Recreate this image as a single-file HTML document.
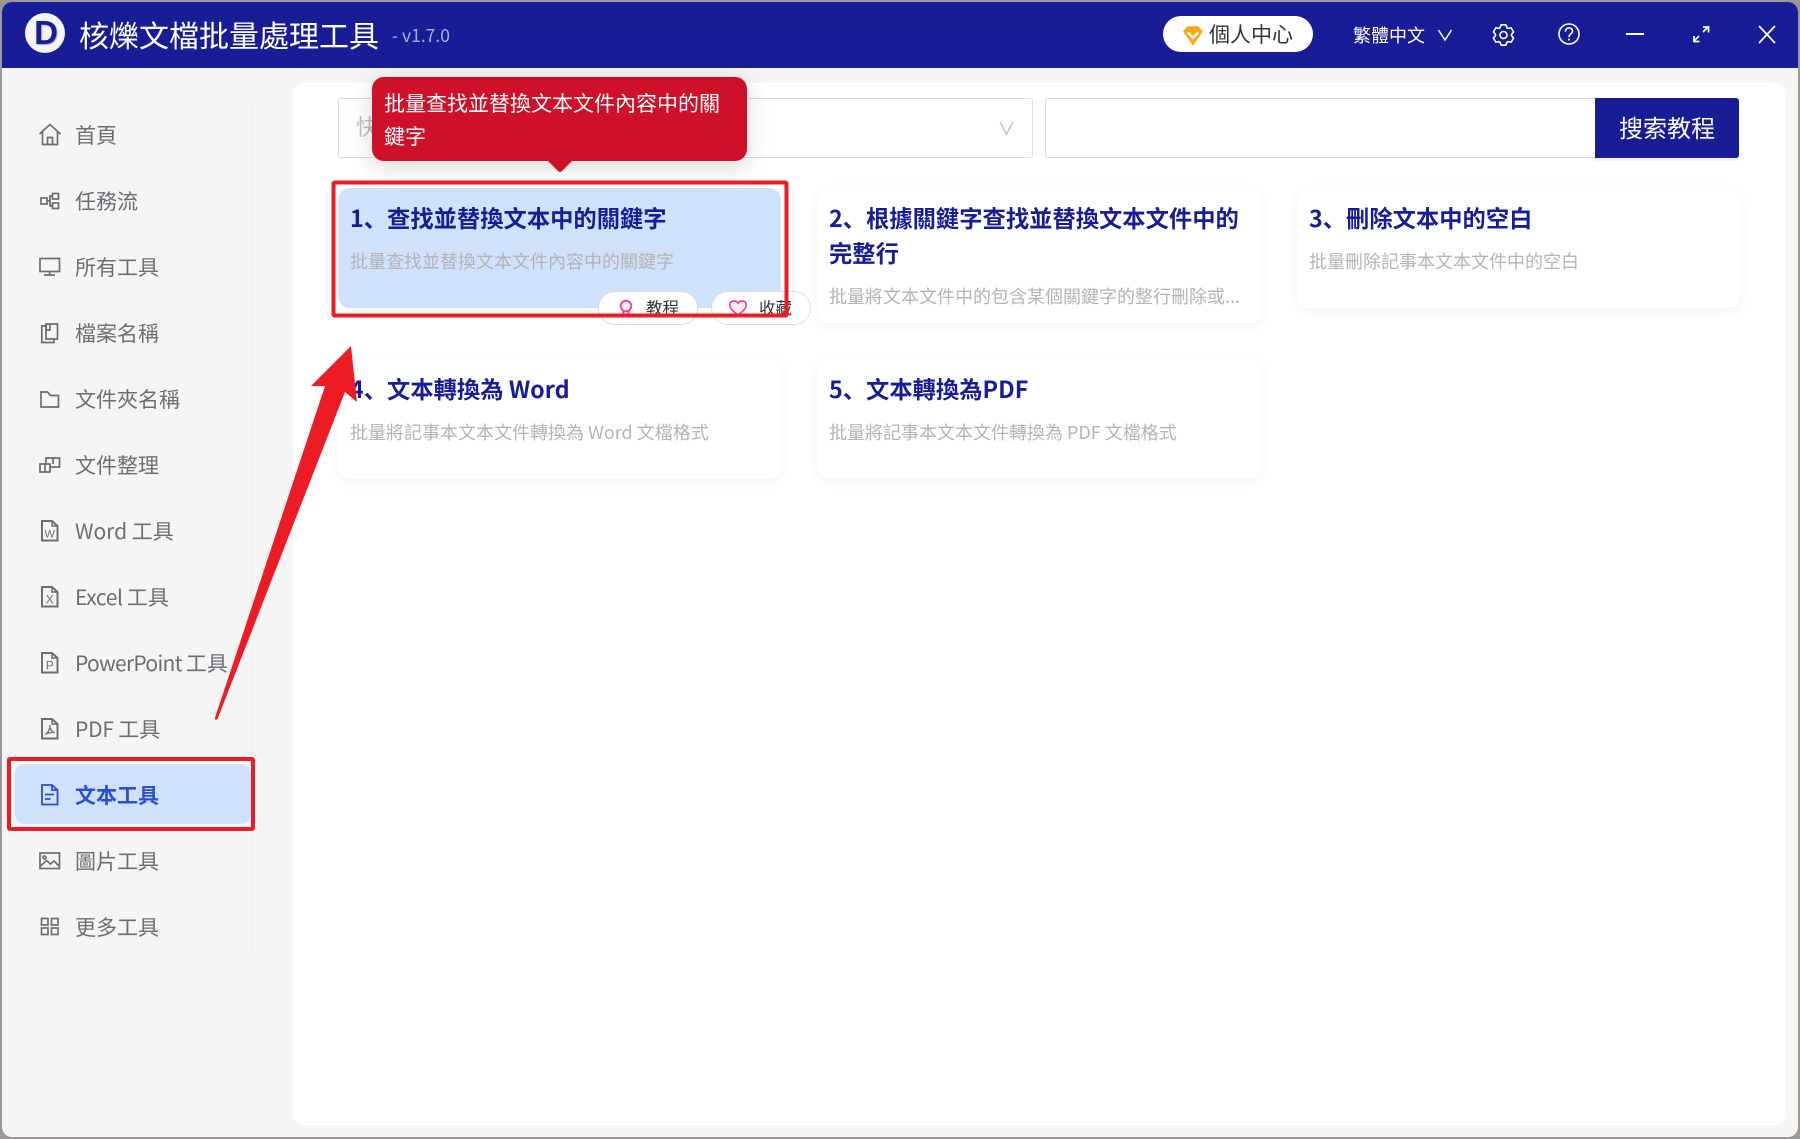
<!DOCTYPE html>
<html lang="zh-Hans">
<head>
<meta charset="utf-8">
<title>核爍文檔批量處理工具</title>
<style>
*{box-sizing:border-box;margin:0;padding:0}
html,body{width:1800px;height:1139px;overflow:hidden;background:#9d9896}
body{position:relative;font-family:"Noto Sans CJK SC","Liberation Sans",sans-serif}
#win{position:absolute;left:2px;top:2px;width:1796px;height:1135px;background:#f5f5f5;border-radius:10px;overflow:hidden}
.a{position:absolute;white-space:nowrap}
#hd{left:2px;top:2px;width:1796px;height:66px;background:#181d97;border-radius:10px 10px 0 0;position:absolute}
.mi{position:absolute;left:75px;height:30px;line-height:30px;font-size:21px;color:#6b6e73;white-space:nowrap}
.card{position:absolute;background:#fff;border-radius:12px;box-shadow:0 3px 12px rgba(0,0,0,.05);width:443px;height:120px}
.t{position:absolute;left:12px;font-size:23.3px;line-height:35px;font-weight:700;color:#181d97;white-space:nowrap}
.d{position:absolute;left:12px;font-size:18px;line-height:26px;color:#b4b4b4;white-space:nowrap}
.pill{position:absolute;top:291px;height:34px;background:#fff;border:1px solid #dcdcdc;border-radius:17px}
.pt{position:absolute;top:292.500px;line-height:28px;font-size:16.500px;color:#333;white-space:nowrap}
</style>
</head>
<body>
<div id="win"></div>
<div id="hd"></div>

<!-- header left -->
<div class="a" style="left:25px;top:13px;width:40px;height:40px;border-radius:50%;background:#f4f4f6"></div>
<div class="a" style="left:33px;top:15px;width:26px;height:36px;line-height:36px;text-align:center;font-family:'Liberation Sans',sans-serif;font-size:33px;font-weight:700;color:#181d97;text-shadow:1px 1px 1px rgba(0,0,0,.3)">D</div>
<div class="a" style="left:79px;top:14px;line-height:40px;font-size:30px;color:#fff">核爍文檔批量處理工具</div>
<div class="a" style="left:392px;top:22.500px;line-height:26px;font-size:17.500px;color:#aeb0d8">- v1.7.0</div>

<!-- header right -->
<div class="a" style="left:1163px;top:16px;width:150px;height:36px;border-radius:18px;background:#fff"></div>
<div class="a" style="left:1209px;top:19px;line-height:30px;font-size:21px;color:#333">個人中心</div>
<div class="a" style="left:1353px;top:20.500px;line-height:28px;font-size:18px;color:#fff">繁體中文</div>

<!-- panel -->
<div class="a" style="left:293px;top:83px;width:1492px;height:1042px;background:#fff;border-radius:10px"></div>
<div class="a" style="left:251px;top:98px;width:1px;height:858px;background:#f0f0f0"></div>

<!-- search row -->
<div class="a" style="left:338px;top:98px;width:695px;height:60px;border:1px solid #dcdcdc;border-radius:3px;background:#fff"></div>
<div class="a" style="left:356px;top:110px;line-height:32px;font-size:22px;color:#c0c0c0">快速搜索</div>
<div class="a" style="left:1045px;top:98px;width:555px;height:60px;border:1px solid #dcdcdc;border-radius:3px 0 0 3px;background:#fff"></div>
<div class="a" style="left:1595px;top:98px;width:144px;height:60px;background:#181d97;border-radius:0 3px 3px 0;box-shadow:0 3px 0 #f2f2f2;color:#fff;font-size:24px;line-height:58px;text-align:center">搜索教程</div>

<!-- sidebar -->
<div class="a" style="left:15px;top:764px;width:236px;height:60px;border-radius:10px;background:#d0e1fb"></div>
<div class="mi" style="top:120px">首頁</div>
<div class="mi" style="top:186px">任務流</div>
<div class="mi" style="top:252px">所有工具</div>
<div class="mi" style="top:318px">檔案名稱</div>
<div class="mi" style="top:384px">文件夾名稱</div>
<div class="mi" style="top:450px">文件整理</div>
<div class="mi" style="top:516px">Word 工具</div>
<div class="mi" style="top:582px"><span style="letter-spacing:-.4px">Excel </span>工具</div>
<div class="mi" style="top:648px"><span style="letter-spacing:-.7px">PowerPoint </span>工具</div>
<div class="mi" style="top:714px"><span style="letter-spacing:-.2px">PDF </span>工具</div>
<div class="mi" style="top:780px;color:#2f4fd2;font-weight:700">文本工具</div>
<div class="mi" style="top:846px">圖片工具</div>
<div class="mi" style="top:912px">更多工具</div>

<!-- cards -->
<div class="card" style="left:338px;top:188px;background:#d0e1fb;box-shadow:none">
  <div class="t" style="top:12px">1、查找並替換文本中的關鍵字</div>
  <div class="d" style="top:59.500px">批量查找並替換文本文件內容中的關鍵字</div>
</div>
<div class="card" style="left:817px;top:188px;height:135px;width:444px">
  <div class="t" style="top:12px">2、根據關鍵字查找並替換文本文件中的</div>
  <div class="t" style="top:47px">完整行</div>
  <div class="d" style="top:94.500px">批量將文本文件中的包含某個關鍵字的整行刪除或...</div>
</div>
<div class="card" style="left:1297px;top:188px">
  <div class="t" style="top:12px">3、刪除文本中的空白</div>
  <div class="d" style="top:59.500px">批量刪除記事本文本文件中的空白</div>
</div>
<div class="card" style="left:338px;top:359px">
  <div class="t" style="top:12px">4、文本轉換為 Word</div>
  <div class="d" style="top:59.500px">批量將記事本文本文件轉換為 Word 文檔格式</div>
</div>
<div class="card" style="left:817px;top:359px;height:119px;width:444px">
  <div class="t" style="top:12px">5、文本轉換為PDF</div>
  <div class="d" style="top:59.500px">批量將記事本文本文件轉換為 PDF 文檔格式</div>
</div>

<!-- card pills -->
<div class="pill" style="left:598px;width:100px"></div>
<div class="pill" style="left:711px;width:100px"></div>
<div class="pt" style="left:646px">教程</div>
<div class="pt" style="left:759px">收藏</div>

<!-- tooltip -->
<div class="a" style="left:372px;top:77px;width:375px;height:84px;background:#cf1029;border-radius:12px;box-shadow:0 6px 24px rgba(0,0,0,.16)"></div>
<div class="a" style="left:384px;top:87px;line-height:33px;font-size:21px;color:#fff">批量查找並替換文本文件內容中的關<br>鍵字</div>

<!-- all vector graphics -->
<svg class="a" style="left:0;top:0" width="1800" height="1139" viewBox="0 0 1800 1139" fill="none">
  <!-- tooltip tail -->
  <path d="M548 161H572L562 171Q560 173 558 171Z" fill="#cf1029"/>

  <!-- header icons -->
  <path d="M1184 31.500L1188 27H1198L1202 31.500L1193 44.500Z" fill="#f9a915" stroke="#f9a915" stroke-width="1.500" stroke-linejoin="round"/>
  <path d="M1188 32.500L1193 38L1198 32.500" stroke="#fff" stroke-width="2.400"/>
  <path d="M1438.500 30L1445 40L1451.500 30" stroke="#fff" stroke-width="1.500"/>
  <g stroke="#fff" stroke-width="1.600">
    <g transform="translate(1503.500 35)" stroke-linejoin="round">
      <path d="M-3.500 -7.190L-2.360 -10.230L2.360 -10.230L3.500 -7.190L4.470 -6.630L7.680 -7.160L10.040 -3.070L7.980 -.560L7.980 .560L10.040 3.070L7.680 7.160L4.470 6.630L3.500 7.190L2.360 10.230L-2.360 10.230L-3.500 7.190L-4.470 6.630L-7.680 7.160L-10.040 3.070L-7.980 .560L-7.980 -.560L-10.040 -3.070L-7.680 -7.160L-4.470 -6.630Z"/>
      <circle cx="0" cy="0" r="3.500"/>
    </g>
    <circle cx="1569" cy="34" r="10"/>
    <path d="M1565.500 31.500C1565.500 26.500 1573 27 1572.500 31.500C1572.300 33.800 1569 34 1569 37"/>
    <path d="M1569 38.500V40.500"/>
    <path d="M1626 34H1644" stroke-width="2"/>
    <path d="M1694 41L1699 36M1703 32L1708 27"/>
    <path d="M1694 36V41.500H1699.500M1703 27H1708.500V32.500" stroke-width="1.800"/>
    <path d="M1759 26L1775 43M1775 26L1759 43" stroke-width="1.700"/>
  </g>

  <!-- search chevron -->
  <path d="M1000 122L1006.500 134L1013 122" stroke="#c4c4c4" stroke-width="1.500"/>

  <!-- sidebar icons -->
  <g stroke="#6b6e73" stroke-width="1.700" stroke-linejoin="miter">
    <!-- home -->
    <path d="M39.500 134L50 124.500L60.500 134"/>
    <path d="M42.500 132V144.500H57.500V132"/>
    <path d="M47.500 144.500V137.500H52.500V144.500"/>
    <!-- flow -->
    <rect x="41" y="198" width="6" height="6"/>
    <rect x="52.500" y="193.500" width="6" height="5.500"/>
    <rect x="52.500" y="203" width="6" height="5.500"/>
    <path d="M47 201H50V196H52.500M50 201V206H52.500"/>
    <!-- monitor -->
    <rect x="40" y="258.500" width="19.500" height="13"/>
    <path d="M49.700 271.500V275M44 275H55"/>
    <!-- docs -->
    <path d="M46 326H41.800V342.500H54V339"/>
    <path d="M46 324H57.500V339H46Z"/>
    <path d="M46 324V330H50V324"/>
    <!-- folder -->
    <path d="M41 392H47.500L50.500 395.500H58.500V407H41Z"/>
    <!-- blocks -->
    <path d="M40 464H50V472H40ZM45 464V472"/>
    <path d="M46 464V458H59.500V467H50M53 458V464"/>
  </g>
  <g stroke="#6b6e73" stroke-width="2">
    <!-- w/x/p/pdf doc outlines -->
    <path d="M42 521H52L57.500 526V540.500H42Z"/><path d="M52 521V526H57.500" stroke-width="1.500"/>
    <path d="M42 587H52L57.500 592V606.500H42Z"/><path d="M52 587V592H57.500" stroke-width="1.500"/>
    <path d="M42 653H52L57.500 658V672.500H42Z"/><path d="M52 653V658H57.500" stroke-width="1.500"/>
    <path d="M42 719H52L57.500 724V738.500H42Z"/><path d="M52 719V724H57.500" stroke-width="1.500"/>
    <path d="M49.500 725C50.500 729 51 731.500 54.500 733M49.500 728C49 731 47.500 733 45.500 735M46 733.500L54.500 732" stroke-width="1.300"/>
  </g>
  <g stroke="#6b6e73" stroke-width="1.700">
    <!-- image -->
    <rect x="40" y="853" width="19.500" height="15.500"/>
    <circle cx="44.500" cy="857.500" r="1.500"/>
    <path d="M40.500 866L46.500 860.500L50.500 864L54 861L59 866"/>
    <!-- grid -->
    <rect x="41.500" y="918.500" width="6.500" height="6.500"/>
    <rect x="51.500" y="918.500" width="6.500" height="6.500"/>
    <rect x="41.500" y="928" width="6.500" height="6.500"/>
    <rect x="51.500" y="928" width="6.500" height="6.500"/>
  </g>
  <g fill="#6b6e73" font-family="Liberation Sans" font-size="12" text-anchor="middle">
    <text x="49.700" y="537.500" font-size="11">W</text>
    <text x="49.700" y="603.500">X</text>
    <text x="49.700" y="669.500">P</text>
  </g>
  <!-- active text icon -->
  <g stroke="#2f4fd2" stroke-width="1.800">
    <path d="M42 785H52L57.500 790V804.500H42Z"/>
    <path d="M52 785V790H57.500"/>
    <path d="M45 794.500H54M45 799H50.500"/>
  </g>

  <!-- pill icons -->
  <circle cx="626" cy="306" r="5.300" fill="#fff0f8" stroke="#ee39a3" stroke-width="1.800"/>
  <path d="M623 311L624 315H628L629 311" stroke="#ee39a3" stroke-width="1.800"/>
  <path d="M738 315C732.500 311 729.800 308.500 729.800 304.800C729.800 300.800 735.500 299.300 738 303.200C740.500 299.300 746.200 300.800 746.200 304.800C746.200 308.500 743.500 311 738 315Z" fill="#fff0f8" stroke="#ee39a3" stroke-width="1.600"/>

  <!-- annotations -->
  <rect x="333.500" y="182.500" width="453" height="133" stroke="#ed1c24" stroke-width="4" rx="1"/>
  <rect x="9" y="759" width="244" height="70" stroke="#ed1c24" stroke-width="4" rx="1"/>
  <path d="M351 346L357 402L345 392L217.500 719Q215.500 720.500 214.800 718.500L325 386H311Z" fill="#ed1c24"/>
</svg>
</body>
</html>
